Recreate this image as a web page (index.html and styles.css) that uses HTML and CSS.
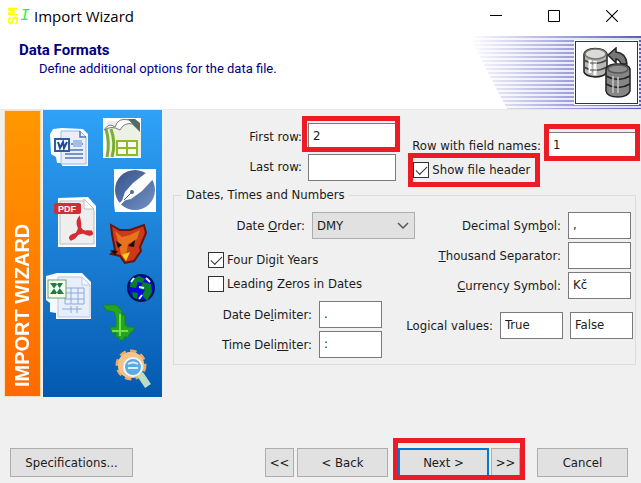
FILE: index.html
```html
<!DOCTYPE html>
<html lang="en">
<head>
    <meta charset="UTF-8">
    <meta name="viewport" content="width=device-width, initial-scale=1.0">
    <title>Import Wizard</title>
    <link rel="stylesheet" href="styles.css">
</head>
<body>
    <div class="window">
        <div class="titlebar">
            <div class="app-icon"><span class="app-icon-sm">SM</span><span class="app-icon-i">I</span></div>
            <span class="window-title">Import Wizard</span>
            <button class="window-button" aria-label="Minimize">
                <svg width="12" height="12" viewBox="0 0 12 12"><path d="M0 5.500h12" stroke="#000"/></svg>
            </button>
            <button class="window-button" aria-label="Maximize">
                <svg width="12" height="12" viewBox="0 0 12 12"><path d="M.5.5h11v11H.5z" fill="none" stroke="#000"/></svg>
            </button>
            <button class="window-button" aria-label="Close">
                <svg width="12" height="12" viewBox="0 0 12 12"><path d="M0 0l12 12M12 0L0 12" stroke="#000" stroke-width="1.100"/></svg>
            </button>
        </div>

        <header class="header">
            <div class="header-text">
                <h1>Data Formats</h1>
                <p>Define additional options for the data file.</p>
            </div>
            <svg class="stripes" width="172" height="73" viewBox="0 0 172 73" preserveAspectRatio="none">
                <defs>
                    <pattern id="lines" width="172" height="4" patternUnits="userSpaceOnUse">
                        <rect width="172" height="2" fill="#5a5ac4"/>
                        <rect y="2" width="172" height="2" fill="#dcdcf4"/>
                    </pattern>
                    <linearGradient id="fade">
                        <stop offset="0" stop-color="#fff" stop-opacity="0"/>
                        <stop offset=".3" stop-color="#fff" stop-opacity=".3"/>
                        <stop offset="1" stop-color="#fff"/>
                    </linearGradient>
                    <mask id="fadeMask"><path d="M0 0h172v73H38z" fill="url(#fade)"/></mask>
                </defs>
                <rect width="172" height="73" fill="url(#lines)" mask="url(#fadeMask)"/>
            </svg>
            <div class="header-icon">
                <svg width="50" height="52" viewBox="0 0 50 52">
                    <g stroke="#222" stroke-width="1.500">
                        <path d="M2 7Q3 2 13 1.500Q24 2 25 7V25Q22 30 13 30Q3 29 2 25z" fill="#b8b8b4"/>
                        <ellipse cx="13.500" cy="7" rx="10.500" ry="5" fill="#d8ddd7" stroke="#777"/>
                        <path d="M2 13q11 7 23 0M2 20q11 7 23 0" fill="none" stroke="#444"/>
                        <path d="M8 13v13M13 14v14" stroke="#fff" stroke-width="3"/>
                        <path d="M8 16h6M8 23h6" stroke="#888"/>
                        <path d="M26 8L34 1V5Q44 6 45 17H39Q38 13 34 12V16z" fill="#777"/>
                        <path d="M24 22Q26 17 36 17Q47 17 48 22V44Q46 50 36 50Q25 50 24 44z" fill="#858585"/>
                        <ellipse cx="36" cy="22" rx="10" ry="4" fill="#8e8e8e" stroke="#555"/>
                        <path d="M24 29q12 7 24 0M24 37q12 7 24 0" fill="none"/>
                        <path d="M31 29v17M36 30v16" stroke="#c8c8c8" stroke-width="1.500"/>
                    </g>
                </svg>
            </div>
        </header>

        <main class="content">
            <aside class="sidebar">
                <div class="banner">IMPORT WIZARD</div>
                <svg class="formats" width="119" height="287" viewBox="0 0 119 287">
                    <defs>
                        <linearGradient id="blue" x2="0" y2="1">
                            <stop offset="0" stop-color="#2fa2f7"/>
                            <stop offset="1" stop-color="#0459b0"/>
                        </linearGradient>
                        <linearGradient id="disc" x2="1" y2="1">
                            <stop offset="0" stop-color="#34548c"/>
                            <stop offset="1" stop-color="#7591c4"/>
                        </linearGradient>
                    </defs>
                    <rect width="119" height="287" fill="url(#blue)"/>
                    <!-- word -->
                    <path d="M7 24l3-5 9-1 21 1 5 5v32H19v-3h-5l-1-6-5-3z" fill="#fff"/>
                    <path d="M18 21h19l6 6v27H18z" fill="#e8effb" stroke="#9db4df"/>
                    <path d="M37 21v6h6M28 34h12M22 40h18M22 44h18M22 48h18" fill="none" stroke="#4f75b5" stroke-width="1.500"/>
                    <rect x="30" y="30" width="9" height="7" fill="#9dc0e6"/>
                    <rect x="12" y="29" width="14" height="12" fill="#f4f8ff" stroke="#315aa5" stroke-width="2"/>
                    <path d="M15 32l2 6 3-6 1 6 3-6" fill="none" stroke="#24478e" stroke-width="2"/>
                    <!-- calc -->
                    <path d="M60 8h38v40H60z" fill="#fff"/>
                    <path d="M64 11h24l10 10v26H64z" fill="#edf1e5"/>
                    <path d="M84 9l13 13V13l-5-4z" fill="#536b67"/>
                    <path d="M63 19q4 14 1 28M68 19q5 14 1 28" fill="none" stroke="#7cad33" stroke-width="3"/>
                    <path d="M61 20q5-8 11-3 3-10 14-7l4 4q-9-2-13 6-8-5-16 0z" fill="#fff" stroke="#777"/>
                    <path d="M74 31h20v14H74zM84 31v14M74 38h20" fill="#f8fbeb" stroke="#8fba25" stroke-width="2"/>
                    <!-- pen disc -->
                    <path d="M71 59h42v43H72l-1-8z" fill="#fff"/>
                    <circle cx="92" cy="80" r="20" fill="url(#disc)"/>
                    <path d="M79 91l3-9 8-9 18-14h5v7L99 81l-11 8z" fill="#fff"/>
                    <path d="M73 98l16-16" stroke="#fff" stroke-width="2"/>
                    <path d="M81 90l7-7" stroke="#506899"/>
                    <circle cx="89" cy="82" r="2" fill="#506899"/>
                    <!-- pdf -->
                    <path d="M15 88l30-1 8 9v41H15z" fill="#fff"/>
                    <path d="M17 91h24l10 9v34H17z" fill="#eeeeee" stroke="#bbb"/>
                    <path d="M41 89v10h10z" fill="#fff" stroke="#bbb"/>
                    <rect x="11" y="93" width="27" height="11" rx="2" fill="#cf2f32"/>
                    <text x="15" y="102" class="pdf-label">PDF</text>
                    <path d="M36 109q2 8-1 13-3 6-7 7-2-2 3-4 8-4 17-3 2 3-3 2-5-1-9-7-2-5 0-8z" fill="none" stroke="#d52c34" stroke-width="3"/>
                    <!-- fox -->
                    <path d="M68 115l9 5h10l14-5 2 8-6 14 1 4-7 10-9 2-5-7-9-2 4-4-3-16z" fill="#c93a1a" stroke="#6a130a" stroke-width="2"/>
                    <path d="M72 121l7 6 8-2 10-5-3 9-9 5-2 12-5-1-2-11z" fill="#e8731d"/>
                    <path d="M73 131l6 4-4 3zM85 136l7-6-1 7zM67 140l8 1-3 4z" fill="#111"/>
                    <path d="M79 145l8-3-4 9z" fill="#ffd51c"/>
                    <!-- excel -->
                    <path d="M3 166l11-3h25l9 9v37H13v-6l-6-1v-9l-4-3z" fill="#f6faff"/>
                    <path d="M15 167h24l8 8v32H15zM39 167v8h8" fill="#e8effb" stroke="#b9c7e6"/>
                    <path d="M22 178h19v16H22zM28 178v16M35 178v16M22 183h19M22 189h19M19 199h20M28 196v7M34 196v7" fill="none" stroke="#8ba8dc"/>
                    <rect x="5" y="170" width="18" height="18" fill="#f5fff2" stroke="#68a367"/>
                    <path d="M7 173h6l8 11h-6zM20 173h-5l-8 11h6z" fill="#247b3f"/>
                    <!-- globe -->
                    <circle cx="98" cy="178" r="13" fill="#0808e8" stroke="#001060" stroke-width="2"/>
                    <path d="M88 170l8-4 6 3-3 4-4-1-2 6-6-1zM100 172l8 2 1 8-5 9-5-6 3-5-5-1zM89 182l6 1-1 6-4-2z" fill="#087d2b"/>
                    <path d="M88 172l3-4M96 177l5 1M103 168l4 4M96 189l3-4" stroke="#d7f6fc" stroke-width="2"/>
                    <!-- import arrow -->
                    <path d="M60 195h14l2 3 3 3v4h3v10h2v2h7v3l-4 3-2 4h-4v3h-5v-3h-3v-4h-4l-2-6h6v-9l-2-6-8-2z" fill="#25a521" stroke="#188326"/>
                    <path d="M77 204v22M69 221h16" stroke="#78df43" stroke-width="2"/>
                    <!-- gear -->
                    <circle cx="88" cy="255" r="13" fill="#f3c38b" stroke="#edaa5f" stroke-width="5" stroke-dasharray="6 4"/>
                    <circle cx="88" cy="255" r="13" fill="#f3c38b"/>
                    <path d="M97 264l8 12" stroke="#bddcc7" stroke-width="7"/>
                    <circle cx="90" cy="257" r="9" fill="#5da9e1" stroke="#eaf5fc" stroke-width="2"/>
                    <path d="M85 254q5-3 10 0M85 258h10" stroke="#d9f0fc" stroke-width="2" fill="none"/>
                </svg>
            </aside>

            <form class="options">
                <div class="rows">
                    <div class="rows-left">
                        <label for="firstRow">First row:</label>
                        <div class="highlight highlight-first"><input type="text" id="firstRow" class="text-input wide" value="2"></div>
                        <label for="lastRow">Last row:</label>
                        <input type="text" id="lastRow" class="text-input wide">
                    </div>
                    <div class="rows-right">
                        <div class="field">
                            <label for="fieldNames">Row with field names:</label>
                            <div class="highlight highlight-names"><input type="text" id="fieldNames" class="text-input wide" value="1"></div>
                        </div>
                        <label class="check highlight highlight-check"><input type="checkbox" checked>Show file header</label>
                    </div>
                </div>

                <fieldset class="group">
                    <legend>Dates, Times and Numbers</legend>
                    <div class="group-left">
                        <div class="field">
                            <label for="dateOrder">Date <u>O</u>rder:</label>
                            <select id="dateOrder"><option>DMY</option><option>MDY</option><option>YMD</option></select>
                        </div>
                        <div class="checks">
                            <label class="check"><input type="checkbox" checked>Four Digit Years</label>
                            <label class="check"><input type="checkbox">Leading Zeros in Dates</label>
                        </div>
                        <div class="delimiters">
                            <div class="field">
                                <label for="dateDelimiter">Date De<u>l</u>imiter:</label>
                                <input type="text" id="dateDelimiter" class="text-input" value=".">
                            </div>
                            <div class="field">
                                <label for="timeDelimiter">Time Deli<u>m</u>iter:</label>
                                <input type="text" id="timeDelimiter" class="text-input" value=":">
                            </div>
                        </div>
                    </div>
                    <div class="group-right">
                        <div class="field">
                            <label for="decimal">Decimal Sym<u>b</u>ol:</label>
                            <input type="text" id="decimal" class="text-input" value=",">
                        </div>
                        <div class="field">
                            <label for="thousand"><u>T</u>housand Separator:</label>
                            <input type="text" id="thousand" class="text-input">
                        </div>
                        <div class="field">
                            <label for="currency"><u>C</u>urrency Symbol:</label>
                            <input type="text" id="currency" class="text-input" value="Kč">
                        </div>
                        <div class="field logical">
                            <label for="logicalTrue">Logical values:</label>
                            <input type="text" id="logicalTrue" class="text-input" value="True">
                            <input type="text" class="text-input" value="False" aria-label="Logical false value">
                        </div>
                    </div>
                </fieldset>
            </form>
        </main>

        <footer class="footer">
            <button class="button specs">Specifications...</button>
            <button class="button small">&lt;&lt;</button>
            <button class="button">&lt; Back</button>
            <div class="next-group highlight highlight-next">
                <button class="button primary">Next &gt;</button>
                <button class="button small">&gt;&gt;</button>
            </div>
            <button class="button cancel">Cancel</button>
        </footer>
    </div>
</body>
</html>
```

FILE: styles.css
```css
* {
    box-sizing: border-box;
}
body {
    font-family: "DejaVu Sans Condensed", "Noto Sans", sans-serif;
    font-size: 13px;
    line-height: 18px;
    margin: 0;
    color: #1a1a1a;
    background: #f0f0f0;
}
.window {
    display: flex;
    flex-direction: column;
    min-height: 100vh;
}
.titlebar {
    display: flex;
    align-items: center;
    height: 36px;
    padding: 0 6px 4px 9px;
    background: #fff;
}
.app-icon {
    display: flex;
    align-items: center;
    width: 20px;
    height: 20px;
    margin-right: 5px;
    font-family: "Liberation Mono", monospace;
}
.app-icon-sm {
    writing-mode: vertical-rl;
    transform: rotate(180deg);
    font-size: 15px;
    line-height: 11px;
    font-weight: bold;
    color: #ff0;
}
.app-icon-i {
    font-size: 16px;
    font-style: italic;
    color: #2bf04a;
}
.window-title {
    flex: 1;
    font-family: "Open Sans", sans-serif;
    font-size: 15px;
    color: #000;
}
.window-button {
    display: flex;
    align-items: center;
    justify-content: center;
    width: 46px;
    height: 30px;
    margin-left: 12px;
    padding: 0;
    border: none;
    background: none;
}
.header {
    display: flex;
    align-items: center;
    position: relative;
    height: 74px;
    padding: 0 3px 0 19px;
    background: #fff;
    border-bottom: 1px solid #e8e8e4;
    font-family: Roboto, sans-serif;
    color: #000080;
}
.header-text {
    flex: 1;
    padding-bottom: 27px;
}
.header h1 {
    margin: 0;
    font-size: 15px;
    line-height: 20px;
}
.header p {
    margin: 0 0 0 20px;
    font-size: 13px;
}
.stripes {
    position: absolute;
    top: 0;
    right: 0;
}
.header-icon {
    display: flex;
    align-items: center;
    justify-content: center;
    position: relative;
    width: 63px;
    height: 63px;
    border: 1px solid #2424b4;
    outline: 1px solid #fff;
    background: #fff;
}
.content {
    display: flex;
    gap: 11px;
    padding: 0 5px 0 4px;
}
.sidebar {
    display: flex;
    align-items: stretch;
    gap: 2px;
}
.banner {
    width: 37px;
    padding: 9px 0;
    border: 1px solid #fbdcb8;
    background: linear-gradient(to top, #ff9800, #ff6a00);
    color: #fff;
    font-family: "Liberation Sans", sans-serif;
    font-size: 20px;
    font-weight: bold;
    line-height: 35px;
    writing-mode: vertical-rl;
    transform: rotate(180deg);
}
.formats {
    display: block;
}
.pdf-label {
    font: bold 9px "Liberation Sans", sans-serif;
    fill: #fff;
}
.options {
    flex: 1;
}
.rows {
    display: flex;
    justify-content: space-between;
    padding-top: 13px;
}
.rows-left {
    display: grid;
    grid-template-columns: 129px auto;
    column-gap: 6px;
    row-gap: 3px;
    align-items: center;
    text-align: right;
}
.rows-right {
    padding-top: 9px;
}
.field {
    display: flex;
    align-items: center;
    justify-content: flex-end;
    gap: 7px;
    white-space: nowrap;
}
.text-input {
    display: block;
    width: 63px;
    height: 27px;
    padding: 0 4px 2px;
    border: 1px solid #7a7a7a;
    background: #fff;
    color: #1a1a1a;
    font: inherit;
}
.wide {
    width: 88px;
}
.highlight {
    position: relative;
}
.highlight::after {
    content: "";
    position: absolute;
    border: 5px solid #ed1c24;
    pointer-events: none;
}
.highlight-first::after {
    inset: -7px -4px -2px -6px;
}
.highlight-names::after {
    inset: -8px -4px -2px -4px;
}
.highlight-check::after {
    inset: -6px -7px -6px -5px;
}
.highlight-next::after {
    inset: -10px -5px -3px -5px;
}
.check {
    display: flex;
    align-items: center;
    gap: 3px;
    height: 24px;
}
.check input {
    appearance: none;
    width: 16px;
    height: 16px;
    margin: 0;
    border: 1px solid #333;
    background: #fff;
}
.check input:checked::before {
    content: "";
    display: block;
    width: 10px;
    height: 5px;
    margin: 3px 2px;
    border-left: 1px solid #333;
    border-bottom: 1px solid #333;
    transform: rotate(-45deg);
}
.rows-right .check {
    width: 120px;
    height: 22px;
    margin-left: 1px;
}
.group {
    display: flex;
    justify-content: space-between;
    margin: 5px 0 0;
    padding: 8px 2px 6px 34px;
    border: 1px solid #dcdcdc;
}
.group legend {
    margin-left: -26px;
    padding: 0 4px;
}
.group-left {
    flex: none;
    width: 207px;
}
select {
    appearance: none;
    width: 103px;
    height: 27px;
    padding: 0 4px;
    border: 1px solid #adadad;
    border-radius: 0;
    background: #e1e1e1 url("data:image/svg+xml,%3Csvg xmlns='http://www.w3.org/2000/svg' width='12' height='8'%3E%3Cpath d='M1 1l5 5 5-5' fill='none' stroke='%23555' stroke-width='1.500'/%3E%3C/svg%3E") no-repeat right 5px center;
    color: #1a1a1a;
    font: inherit;
}
.checks {
    padding: 9px 0 5px;
}
.delimiters {
    display: grid;
    gap: 3px;
    padding-right: 33px;
}
.group-right {
    display: flex;
    flex-direction: column;
    gap: 3px;
}
.group-right .field {
    padding-right: 2px;
}
/* wider than the rows above, reaches under the date order box */
.group-right .logical {
    margin: 10px 0 0 -20px;
    padding-right: 0;
}
.footer {
    display: flex;
    gap: 3px;
    margin-top: auto;
    padding: 20px 13px 6px 10px;
}
.button {
    width: 91px;
    height: 29px;
    padding: 0;
    border: 1px solid #adadad;
    background: #e1e1e1;
    color: #1a1a1a;
    font: inherit;
}
.small {
    width: 29px;
}
.specs {
    width: 123px;
    margin-right: auto;
}
.primary {
    border: 2px solid #0078d7;
}
.next-group {
    display: flex;
    gap: 2px;
    margin-left: 7px;
}
.cancel {
    margin-left: 14px;
}
```
